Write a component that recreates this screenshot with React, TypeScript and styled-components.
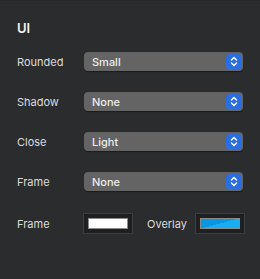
import styled, { createGlobalStyle } from 'styled-components';

const Global = createGlobalStyle`
  html, body {
    margin: 0;
    background: #2b2c2e;
  }
  body {
    font-family: Inter, "Liberation Sans", sans-serif;
  }
`;

const Panel = styled.div`
  width: 260px;
  height: 279px;
  box-sizing: border-box;
  background: #2b2c2e;
  border-top: 1px solid #262729;
  padding: 19px 0 0 17px;
`;

const Title = styled.div`
  color: #f2f2f2;
  font-size: 13px;
  font-weight: 600;
  height: 16px;
  line-height: 16px;
`;

const Rows = styled.div`
  display: flex;
  flex-direction: column;
  gap: 21px;
  margin-top: 16px;
`;

const Row = styled.div`
  display: flex;
  align-items: center;
  height: 19px;
`;

const Label = styled.div<{ $w?: number; $gap?: number }>`
  width: ${(p) => p.$w ?? 67}px;
  margin-left: ${(p) => p.$gap ?? 0}px;
  color: #dcdcdc;
  font-size: 11px;
  padding-top: 1px;
`;

const Select = styled.div`
  width: 159px;
  height: 19px;
  box-sizing: border-box;
  background: #646464;
  border-radius: 4px;
  display: flex;
  align-items: center;
  justify-content: space-between;
  padding: 0 1px 0 8px;
  box-shadow: 0 0.5px 1px rgba(0, 0, 0, 0.4);
`;

const Value = styled.span`
  color: #ececec;
  font-size: 11px;
  font-weight: 500;
`;

const Stepper = styled.div`
  width: 16px;
  height: 16px;
  border-radius: 4px;
  background: #2c6ee0;
  display: flex;
  align-items: center;
  justify-content: center;
`;

const ColorRow = styled.div`
  display: flex;
  align-items: center;
  height: 21px;
  margin-top: 1px;
`;

const Well = styled.div`
  width: 50px;
  height: 21px;
  box-sizing: border-box;
  border: 1px solid #3d3e40;
  background: #1e1f21;
  padding: 4px;
`;

const Swatch = styled.div<{ $fill: string }>`
  width: 100%;
  height: 100%;
  box-sizing: border-box;
  border: 1px solid #8a8a8a;
  background: ${(p) => p.$fill};
`;

const Chevrons = () => (
  <svg width="8" height="11" viewBox="0 0 8 11" fill="none">
    <path d="M1.5 4 L4 1.5 L6.5 4" stroke="#fff" strokeWidth="1.4" strokeLinecap="round" strokeLinejoin="round" />
    <path d="M1.5 7 L4 9.5 L6.5 7" stroke="#fff" strokeWidth="1.4" strokeLinecap="round" strokeLinejoin="round" />
  </svg>
);

const selects = [
  { label: 'Rounded', value: 'Small' },
  { label: 'Shadow', value: 'None' },
  { label: 'Close', value: 'Light' },
  { label: 'Frame', value: 'None' },
];

export default function App() {
  return (
    <>
      <Global />
      <Panel>
        <Title>UI</Title>
        <Rows>
          {selects.map((s) => (
            <Row key={s.label}>
              <Label>{s.label}</Label>
              <Select>
                <Value>{s.value}</Value>
                <Stepper>
                  <Chevrons />
                </Stepper>
              </Select>
            </Row>
          ))}
          <ColorRow>
            <Label $w={66}>Frame</Label>
            <Well>
              <Swatch $fill="#ffffff" />
            </Well>
            <Label $w={48} $gap={14}>Overlay</Label>
            <Well>
              <Swatch $fill="linear-gradient(165deg, #0897e4 50%, #1badf4 50%)" />
            </Well>
          </ColorRow>
        </Rows>
      </Panel>
    </>
  );
}
